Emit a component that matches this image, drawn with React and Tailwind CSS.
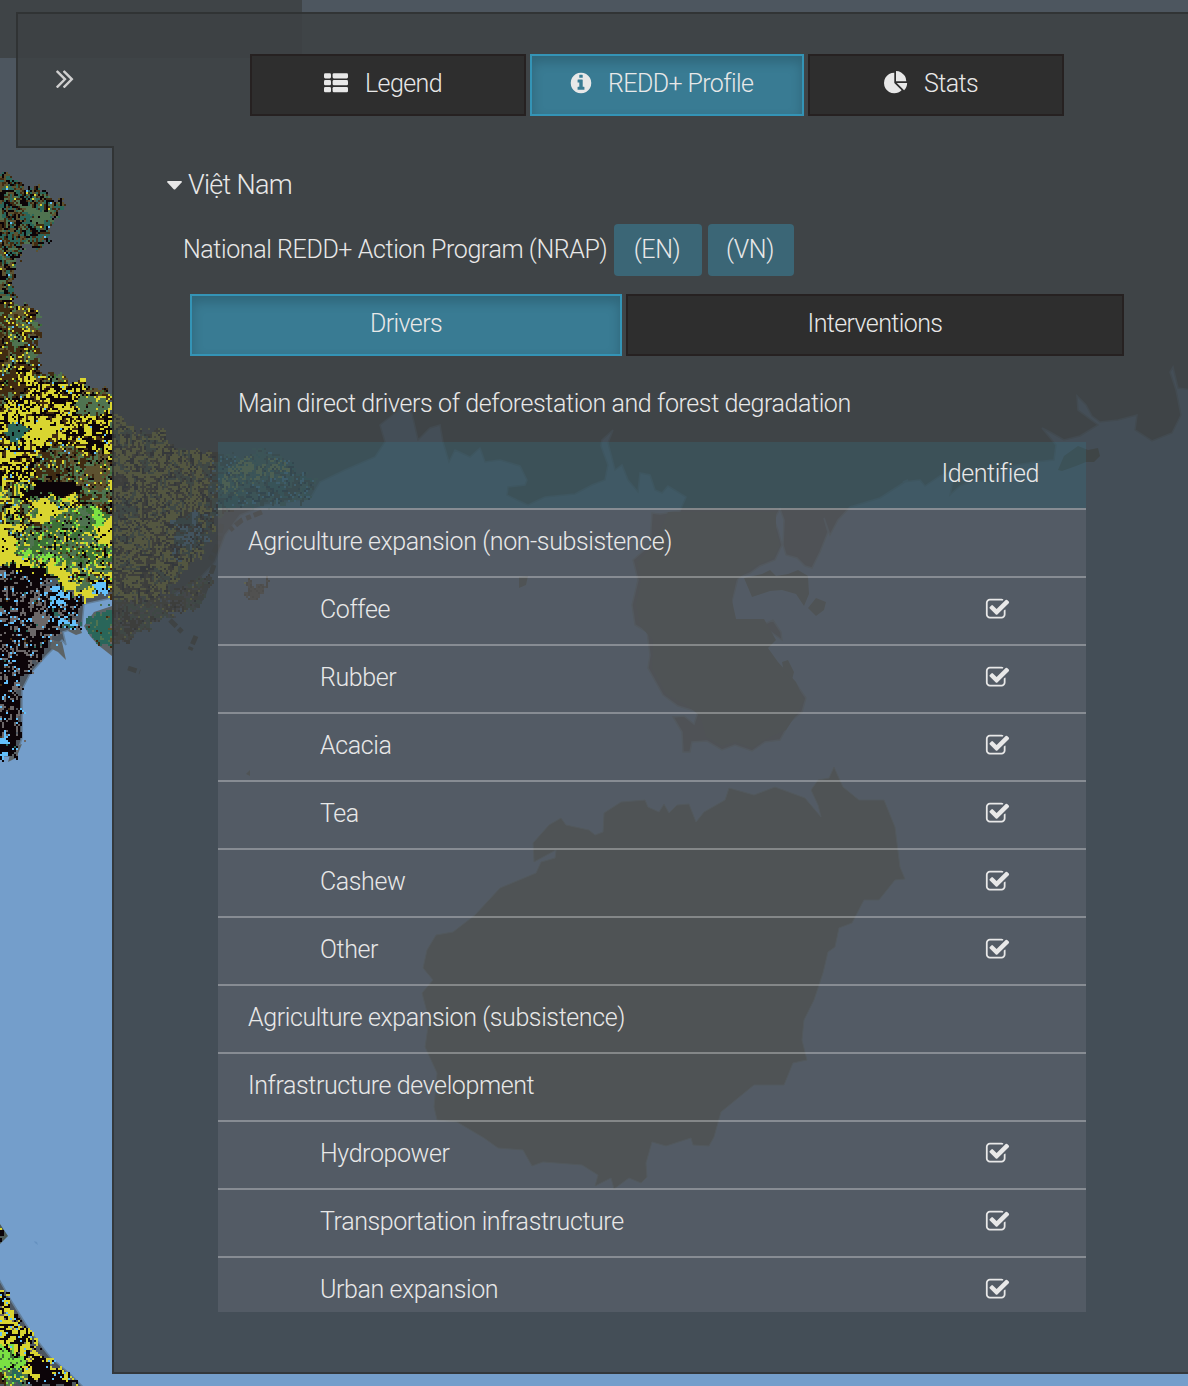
import React from 'react';

/* ---------- Map terrain ---------- */

const COLORS = {
  yellow: '#d9d530',
  black: '#0c0408',
  brown: '#402b12',
  teal: '#2a665a',
  green: '#4f7350',
  moss: '#3c7038',
  cyan: '#63c0fb',
  lime: '#7be043',
  gray: '#6b6768',
  olive: '#5d5230',
};

// Later regions are drawn over earlier ones. `main` colours follow the broad
// noise, `black` is the density of dark veins, specks are scattered per cell.
const REGIONS = [
  {
    poly: [[0, 172], [8, 172], [20, 180], [30, 189], [38, 184], [48, 197], [56, 202], [67, 200], [64, 208], [54, 218], [50, 232], [45, 245], [35, 249], [24, 243], [18, 262], [14, 285], [16, 302], [0, 305]],
    main: ['teal', 'olive', 'teal', 'green', 'olive', 'teal'],
    black: 0.3,
    specks: [['brown', 0.25], ['yellow', 0.02], ['cyan', 0.01]],
  },
  {
    poly: [[24, 212], [34, 206], [54, 212], [48, 222], [40, 230], [24, 226]],
    main: ['teal', 'green'],
    black: 0.08,
    specks: [['brown', 0.08]],
  },
  {
    poly: [[0, 295], [16, 303], [32, 303], [38, 318], [39, 340], [34, 345], [41, 358], [38, 372], [50, 377], [56, 374], [72, 382], [84, 380], [90, 389], [102, 387], [112, 391], [112, 480], [60, 490], [0, 480]],
    main: ['green', 'brown', 'brown', 'green', 'olive', 'brown'],
    black: 0.16,
    specks: [['yellow', 0.09], ['brown', 0.12], ['cyan', 0.012], ['moss', 0.04]],
  },
  {
    poly: [[8, 364], [22, 362], [34, 376], [60, 386], [86, 376], [86, 394], [112, 394], [112, 450], [96, 460], [70, 440], [46, 446], [36, 458], [34, 492], [0, 494], [0, 410], [26, 392]],
    main: ['yellow', 'yellow', 'brown', 'yellow', 'yellow', 'black', 'yellow'],
    black: 0.36,
    specks: [['brown', 0.05], ['cyan', 0.02], ['yellow', 0.1]],
  },
  { poly: [[78, 396], [108, 398], [106, 412], [84, 416], [74, 406]], main: ['green'], black: 0.06, specks: [['brown', 0.1]] },
  { poly: [[10, 426], [24, 422], [26, 434], [18, 444], [6, 438]], main: ['teal'], black: 0.1, specks: [['cyan', 0.03]] },
  { poly: [[92, 424], [102, 422], [104, 436], [94, 440]], main: ['black'], black: 0, specks: [['cyan', 0.03], ['yellow', 0.08]] },
  { poly: [[28, 422], [48, 418], [54, 430], [44, 444], [28, 440]], main: ['yellow'], black: 0.08, specks: [] },
  {
    poly: [[0, 484], [112, 484], [112, 590], [84, 600], [60, 588], [44, 572], [18, 566], [0, 562]],
    main: ['yellow', 'moss', 'green', 'yellow', 'brown', 'green'],
    black: 0.24,
    specks: [['yellow', 0.1], ['cyan', 0.02], ['lime', 0.02]],
  },
  {
    poly: [[36, 526], [60, 512], [88, 506], [112, 512], [112, 568], [70, 562], [14, 556], [16, 540]],
    main: ['green', 'moss', 'green', 'moss'],
    black: 0.15,
    specks: [['lime', 0.05], ['yellow', 0.14], ['gray', 0.02], ['brown', 0.04]],
  },
  { poly: [[34, 502], [44, 498], [60, 506], [54, 518], [40, 520]], main: ['yellow'], black: 0.1, specks: [] },
  { poly: [[0, 524], [22, 524], [22, 530], [0, 532]], main: ['yellow'], black: 0.05, specks: [] },
  { poly: [[96, 530], [108, 518], [114, 520], [114, 546], [98, 542]], main: ['yellow'], black: 0.15, specks: [] },
  { poly: [[92, 518], [98, 508], [103, 516], [103, 528], [92, 528]], main: ['lime'], black: 0, specks: [['moss', 0.15]] },
  { poly: [[16, 550], [48, 554], [66, 558], [40, 560], [16, 555]], main: ['lime'], black: 0.05, specks: [['green', 0.3]] },
  { poly: [[0, 532], [14, 536], [16, 556], [0, 562]], main: ['yellow'], black: 0.16, specks: [] },
  {
    poly: [[46, 566], [54, 560], [64, 564], [68, 580], [80, 588], [92, 584], [97, 596], [84, 600], [70, 592], [56, 578]],
    main: ['yellow'],
    black: 0.05,
    specks: [],
  },
  { poly: [[76, 580], [90, 578], [91, 588], [78, 590]], main: ['green', 'olive'], black: 0.12, specks: [['yellow', 0.1]] },
  {
    poly: [[36, 460], [112, 450], [112, 500], [96, 506], [78, 500], [64, 482], [40, 480]],
    main: ['green', 'brown', 'green', 'olive'],
    black: 0.14,
    specks: [['brown', 0.14], ['yellow', 0.04], ['moss', 0.06], ['cyan', 0.01]],
  },
  {
    poly: [[32, 486], [46, 480], [68, 479], [82, 489], [80, 493], [62, 494], [26, 499]],
    main: ['black'],
    black: 0,
    specks: [],
  },
  {
    poly: [[0, 562], [24, 566], [50, 584], [70, 594], [84, 602], [76, 614], [80, 628], [62, 630], [44, 654], [28, 672], [20, 686], [21, 738], [16, 756], [0, 760]],
    main: ['black', 'gray', 'black', 'gray', 'black'],
    black: 0.45,
    specks: [['cyan', 0.12], ['gray', 0.1], ['brown', 0.02], ['teal', 0.01]],
  },
  { poly: [[4, 562], [40, 570], [56, 580], [36, 580], [10, 572]], main: ['black'], black: 0, specks: [['yellow', 0.04]] },
  { poly: [[34, 616], [46, 614], [48, 624], [36, 628]], main: ['gray'], black: 0, specks: [] },
  { poly: [[0, 736], [14, 736], [18, 744], [10, 758], [0, 760]], main: ['cyan', 'black', 'cyan'], black: 0.2, specks: [['teal', 0.1]] },
  { poly: [[54, 586], [62, 584], [66, 600], [58, 608], [50, 602]], main: ['cyan'], black: 0.35, specks: [] },
  { poly: [[50, 612], [64, 614], [78, 620], [74, 630], [60, 628]], main: ['cyan', 'teal', 'cyan'], black: 0.25, specks: [['gray', 0.1]] },
  { poly: [[96, 584], [112, 580], [112, 592], [98, 596]], main: ['cyan', 'black'], black: 0.2, specks: [] },
  {
    poly: [[84, 624], [94, 612], [112, 606], [112, 652], [98, 640]],
    main: ['teal'],
    black: 0,
    specks: [['green', 0.08], ['brown', 0.04]],
  },
  {
    poly: [[112, 416], [125, 420], [138, 434], [165, 428], [170, 448], [190, 450], [215, 454], [215, 520], [205, 548], [176, 584], [150, 602], [130, 608], [112, 600]],
    main: ['yellow', 'brown', 'yellow', 'yellow', 'green', 'yellow'],
    black: 0.2,
    specks: [['brown', 0.08], ['olive', 0.08]],
  },
  {
    poly: [[172, 520], [196, 510], [214, 512], [206, 545], [188, 552], [174, 560]],
    main: ['teal', 'cyan', 'teal', 'yellow'],
    black: 0.3,
    specks: [['brown', 0.15]],
  },
  {
    poly: [[210, 452], [235, 458], [265, 448], [282, 458], [300, 472], [318, 480], [308, 500], [270, 504], [240, 508], [210, 520]],
    main: ['teal', 'green', 'brown', 'teal'],
    black: 0.2,
    specks: [['cyan', 0.14]],
  },
  {
    poly: [[220, 482], [240, 456], [262, 449], [290, 470], [268, 478], [245, 490], [220, 502]],
    main: ['yellow', 'green', 'yellow'],
    black: 0.05,
    specks: [['teal', 0.15], ['brown', 0.15]],
  },
  {
    poly: [[112, 600], [165, 598], [178, 590], [212, 574], [206, 600], [186, 612], [160, 618], [130, 640], [112, 648]],
    main: ['brown', 'olive', 'green', 'brown'],
    black: 0.05,
    specks: [['yellow', 0.06], ['gray', 0.2]],
  },
  { poly: [[245, 584], [256, 578], [252, 590], [272, 578], [268, 590], [250, 602]], main: ['yellow', 'olive'], black: 0, specks: [['brown', 0.3]] },
  { poly: [[0, 1228], [6, 1236], [0, 1242]], main: ['yellow', 'black'], black: 0, specks: [] },
  {
    poly: [[0, 1286], [8, 1300], [28, 1334], [48, 1358], [68, 1376], [82, 1386], [0, 1386]],
    main: ['yellow', 'black', 'yellow', 'yellow', 'yellow'],
    black: 0.36,
    specks: [['cyan', 0.07], ['gray', 0.05]],
  },
  { poly: [[30, 1356], [40, 1358], [64, 1378], [66, 1386], [40, 1386]], main: ['black'], black: 0, specks: [['cyan', 0.06]] },
  { poly: [[0, 1342], [12, 1350], [28, 1360], [26, 1368], [10, 1372], [0, 1370]], main: ['lime'], black: 0.12, specks: [['moss', 0.2]] },
  { poly: [[0, 1370], [26, 1366], [28, 1386], [0, 1386]], main: ['brown', 'green', 'teal'], black: 0.15, specks: [['lime', 0.12], ['yellow', 0.1]] },
];

function hash(x, y, s) {
  let h = Math.imul(x, 374761393) ^ Math.imul(y, 668265263) ^ Math.imul(s + 1, 1274126177);
  h = Math.imul(h ^ (h >>> 13), 1103515245);
  h = Math.imul(h ^ (h >>> 16), 2246822519);
  return ((h ^ (h >>> 15)) >>> 0) / 4294967296;
}

function smooth(x, y, s) {
  const xi = Math.floor(x);
  const yi = Math.floor(y);
  const fx = x - xi;
  const fy = y - yi;
  const a = hash(xi, yi, s) * (1 - fx) + hash(xi + 1, yi, s) * fx;
  const b = hash(xi, yi + 1, s) * (1 - fx) + hash(xi + 1, yi + 1, s) * fx;
  return a * (1 - fy) + b * fy;
}

function inside(px, py, poly) {
  let hit = false;
  for (let i = 0, j = poly.length - 1; i < poly.length; j = i++) {
    const [xi, yi] = poly[i];
    const [xj, yj] = poly[j];
    if (yi > py !== yj > py && px < ((xj - xi) * (py - yi)) / (yj - yi) + xi) hit = !hit;
  }
  return hit;
}

function cellColor(cx, cy) {
  const x = cx * 2 + 1;
  const y = cy * 2 + 1;
  const jx = Math.max(1, x + (smooth(cx / 2, cy / 2, 5) - 0.5) * 10);
  const jy = y + (smooth(cx / 2, cy / 2, 9) - 0.5) * 10;
  for (let i = REGIONS.length - 1; i >= 0; i--) {
    const region = REGIONS[i];
    if (!inside(jx, jy, region.poly)) continue;
    const vein = Math.abs(smooth(cx / 2.6, cy / 2.6, 40) - 0.5) + hash(cx, cy, 50) * 0.04;
    if (vein < region.black * 0.29) return 'black';
    let r = hash(cx, cy, 3);
    for (const [name, weight] of region.specks) {
      if (r < weight) return name;
      r -= weight;
    }
    const n = smooth(cx / 4.5, cy / 4.5, 21) * 0.75 + smooth(cx / 1.8, cy / 1.8, 33) * 0.25;
    const k = Math.min(0.999, Math.max(0, (n - 0.2) / 0.6));
    return region.main[Math.floor(k * region.main.length)];
  }
  return null;
}

function buildTerrain() {
  const paths = {};
  for (let cy = 84; cy < 693; cy++) {
    if (cy > 384 && cy < 610) continue;
    let start = 0;
    let current = null;
    for (let cx = 0; cx <= 162; cx++) {
      const c = cx === 162 ? null : cellColor(cx, cy);
      if (c !== current) {
        if (current) paths[current] = (paths[current] || '') + `M${start * 2} ${cy * 2}h${(cx - start) * 2}v2h-${(cx - start) * 2}z`;
        current = c;
        start = cx;
      }
    }
  }
  return paths;
}

const TERRAIN = buildTerrain();

const SEA =
  'M-4 755L16 757L22 738L22 690L30 674L46 656L62 640L66 645L63 632L82 626L84 604L112 598L165 600L200 578L215 562L225 535L240 515L265 505L310 499L320 482L345 470L375 457L385 442L380 425L395 413L403 405L412 414L418 440L430 428L440 425L443 442L449 462L455 450L470 457L480 448L485 462L500 460L520 466L527 480L525 485L508 487L507 495L517 500L528 505L545 497L575 494L592 485L605 480L608 465L601 446L602 440L613 430L608 443L615 470L622 465L628 480L638 492L640 473L650 475L655 490L662 493L668 486L686 497L680 511L660 514L652 513L650 545L633 560L638 580L632 605L635 625L647 632L650 655L648 668L663 695L678 706L688 709L698 712L694 724L684 716L673 717L682 732L683 752L690 752L692 742L707 741L722 750L735 745L752 751L765 742L780 740L790 722L802 712L806 698L797 685L785 677L775 665L765 655L763 645L768 630L782 640L781 632L773 620L765 624L736 621L731 605L735 590L738 578L750 573L760 566L775 560L782 545L778 530L774 520L780 509L784 520L783 545L786 555L797 558L805 566L812 568L820 552L828 532L824 518L830 535L838 520L850 507L880 498L908 480L903 482L920 480L925 486L940 476L955 470L950 495L960 486L975 480L990 482L1010 466L1035 462L1054 460L1056 445L1042 428L1050 432L1064 440L1080 436L1098 425L1078 410L1077 396L1086 405L1092 416L1100 422L1118 420L1137 415L1135 430L1152 441L1172 433L1181 415L1176 390L1170 372L1173 367L1178 388L1192 390V1390H86L70 1374L50 1357L30 1331L12 1302L-4 1274Z';

const PENINSULA =
  'M668 512L776 512L776 530L780 545L774 558L758 565L744 574L736 580L732 600L736 619L764 619L776 640L768 648L778 662L796 682L804 700L798 712L786 730L768 738L752 748L735 742L722 746L706 737L700 716L688 706L666 694L652 668L653 640L640 626L636 604L641 580L637 562L653 546Z';

const HAINAN =
  'M533 843L549 825L561 818L566 825L589 830L595 835L603 832L604 813L621 802L645 800L648 807L659 812L664 804L669 813L677 805L689 804L696 822L704 812L725 800L729 788L754 795L775 787L805 798L821 817L818 805L811 790L818 780L829 778L834 767L843 787L859 800L884 800L895 827L900 867L905 879L895 880L879 900L864 900L852 923L839 928L835 947L828 952L823 973L814 1000L804 1020L802 1040L807 1060L793 1063L784 1085L754 1085L721 1112L714 1137L709 1146L693 1145L691 1138L666 1146L652 1142L646 1163L647 1177L641 1183L629 1178L614 1189L611 1178L595 1186L598 1175L582 1165L543 1162L532 1166L523 1150L498 1148L484 1138L457 1122L437 1120L434 1107L437 1073L425 1047L429 1020L422 993L433 980L423 968L427 950L436 935L453 932L475 915L500 888L536 873L541 862L555 858L556 850L534 862Z';

const ISLANDS =
  'M744 578L762 574L770 570L776 576L788 574L798 570L808 576L809 594L804 606L796 594L782 590L770 591L752 597ZM816 598L826 602L824 610L816 616L808 608ZM519 577L528 576L526 585L519 588ZM1088 450L1098 448L1100 456L1094 462L1086 462L1076 466L1062 471L1058 470L1064 456L1078 446ZM246 774L250 770L250 776ZM782 662L788 660L794 672L792 680L784 672ZM0 1224L8 1236L0 1244Z';

function MapBackground() {
  return (
    <svg className="absolute inset-0" width="1188" height="1386" viewBox="0 0 1188 1386" aria-hidden="true">
      <rect width="1188" height="1386" fill="#4d565f" />
      <path d={SEA} fill="#749ecb" stroke="#637f9a" strokeWidth="1.500" />
      <path d={PENINSULA} fill="#4d5c58" />
      <path d={HAINAN} fill="#4d5e58" stroke="#637f91" strokeWidth="1" />
      <path d={ISLANDS} fill="#4d5a56" />
      <path d="M84 626L94 612L112 606V656L98 645L90 636ZM52 640l10 2 4 18-8-8-8-4zM70 628l10 0 2 5-6 2-8-4zM12 748l10-4-6 14-8 4z" fill="#5c6366" />
      <path d="M34 1241l3 1 1 3-3-2z" fill="#6691c0" />
      <g shapeRendering="crispEdges">
        {Object.entries(TERRAIN).map(([name, d]) => (
          <path key={name} d={d} fill={COLORS[name]} />
        ))}
      </g>
      <path d="M222 524l-5 22-8 16M262 512l-20 8-12 10M214 565l-10 28-8 14M170 620l14 14M196 636l-6 14M128 668l12 4" fill="none" stroke="#4d4f4a" strokeWidth="5" strokeDasharray="9 3 5 4" />
    </svg>
  );
}

/* ---------- Icons ---------- */

const ListIcon = () => (
  <svg width="24" height="20" viewBox="0 0 24 20" fill="currentColor">
    {[0.2, 7.1, 14].map((y) => (
      <g key={y}>
        <rect x="0" y={y} width="7" height="5.2" rx="1.3" />
        <rect x="8.6" y={y} width="15.4" height="5.2" rx="1.3" />
      </g>
    ))}
  </svg>
);

const InfoIcon = () => (
  <svg width="24" height="24" viewBox="0 0 1792 1792" fill="currentColor">
    <path d="M1152 1376v-160q0-14-9-23t-23-9h-96v-512q0-14-9-23t-23-9h-320q-14 0-23 9t-9 23v160q0 14 9 23t23 9h96v320h-96q-14 0-23 9t-9 23v160q0 14 9 23t23 9h448q14 0 23-9t9-23zm-128-896v-160q0-14-9-23t-23-9h-192q-14 0-23 9t-9 23v160q0 14 9 23t23 9h192q14 0 23-9t9-23zm640 416q0 209-103 385.500t-279.500 279.500-385.500 103-385.500-103-279.500-279.500-103-385.500 103-385.500 279.500-279.500 385.500-103 385.500 103 279.500 279.500 103 385.500z" />
  </svg>
);

const PieIcon = () => (
  <svg width="24" height="24" viewBox="0 0 1792 1792" fill="currentColor">
    <path d="M768 890l546 546q-106 108-247.500 168t-298.500 60q-209 0-385.500-103t-279.500-279.500-103-385.500 103-385.500 279.500-279.500 385.500-103v762zm187 6h773q0 157-60 298.500t-168 247.500zm709-128h-768v-768q209 0 385.500 103t279.500 279.500 103 385.500z" />
  </svg>
);

const CheckIcon = () => (
  <svg width="25" height="25" viewBox="0 0 1792 1792" fill="currentColor">
    <path d="M1472 930v318q0 119-84.500 203.500t-203.500 84.500h-832q-119 0-203.500-84.500t-84.500-203.500v-832q0-119 84.500-203.500t203.500-84.500h832q63 0 117 25 15 7 18 23 3 17-9 29l-49 49q-10 10-23 10-3 0-9-2-23-6-45-6h-832q-66 0-113 47t-47 113v832q0 66 47 113t113 47h832q66 0 113-47t47-113v-254q0-13 9-22l64-64q10-10 23-10 6 0 12 3 20 8 20 29zm231-489l-814 814q-24 24-57 24t-57-24l-430-430q-24-24-24-57t24-57l110-110q24-24 57-24t57 24l263 263 647-647q24-24 57-24t57 24l110 110q24 24 24 57t-24 57z" />
  </svg>
);

const DoubleChevron = () => (
  <svg width="32" height="32" viewBox="0 0 1792 1792" fill="currentColor">
    <path d="M979 960q0 13-10 23l-466 466q-10 10-23 10t-23-10l-50-50q-10-10-10-23t10-23l393-393-393-393q-10-10-10-23t10-23l50-50q10-10 23-10t23 10l466 466q10 10 10 23zm384 0q0 13-10 23l-466 466q-10 10-23 10t-23-10l-50-50q-10-10-10-23t10-23l393-393-393-393q-10-10-10-23t10-23l50-50q10-10 23-10t23 10l466 466q10 10 10 23z" />
  </svg>
);

/* ---------- Panel ---------- */

function TabButton({ active, className, children }) {
  return (
    <button
      className={
        (active
          ? 'border-[#3494b6] bg-[#397b93] shadow-[inset_0_6px_12px_rgba(0,0,0,0.18)] '
          : 'border-[#262121] bg-[#2e2e2e] ') +
        'flex h-[62px] shrink-0 items-center border-2 font-light tracking-[-0.6px] whitespace-nowrap ' +
        className
      }
    >
      {children}
    </button>
  );
}

const ROWS = [
  ['Agriculture expansion (non-subsistence)', false],
  ['Coffee', true],
  ['Rubber', true],
  ['Acacia', true],
  ['Tea', true],
  ['Cashew', true],
  ['Other', true],
  ['Agriculture expansion (subsistence)', false],
  ['Infrastructure development', false],
  ['Hydropower', true],
  ['Transportation infrastructure', true],
  ['Urban expansion', true],
];

function DriversTable() {
  return (
    <div className="ml-[104px] h-[870px] w-[868px] overflow-hidden">
      <div className="flex h-[66px] items-center justify-end bg-[rgba(49,133,161,0.2)] pr-[47px] pb-0.5">Identified</div>
      {ROWS.map(([label, item]) => (
        <div
          key={label}
          className={
            (item ? 'pl-[102px] ' : 'pl-[30px] ') +
            'flex h-[68px] items-center justify-between border-t-2 border-white/30 bg-[rgba(248,236,246,0.09)] pr-[76px] pb-1'
          }
        >
          <span className="pt-0.5">{label}</span>
          {item && <CheckIcon />}
        </div>
      ))}
    </div>
  );
}

export default function App() {
  return (
    <div className="relative h-[1386px] w-[1188px] overflow-hidden bg-[#4d565f] font-['Roboto',sans-serif] text-[25px] leading-[30px] font-light tracking-[-0.4px] text-[#e8e8e8]">
      <MapBackground />
      <div className="absolute top-0 left-0 h-[58px] w-[302px] bg-[rgba(61,65,67,0.86)]" />
      <div className="relative pt-3 pl-4">
        <div className="flex h-[136px]">
          <div className="flex w-[98px] shrink-0 border-t-2 border-b-2 border-l-2 border-[rgba(40,42,42,0.6)] bg-[rgba(61,65,67,0.86)] pt-12 pl-[31px] text-[#cfcfcf]">
            <DoubleChevron />
          </div>
          <div className="flex flex-1 gap-1 border-t-2 border-[rgba(40,42,42,0.6)] bg-[rgba(61,65,67,0.86)] pt-10 pl-[136px]">
            <TabButton className="w-[276px] gap-[17px] pb-1 pl-[72px]">
              <ListIcon />
              <span className="pt-0.5">Legend</span>
            </TabButton>
            <TabButton active className="w-[274px] gap-[15px] pb-1 pl-[37px]">
              <InfoIcon />
              <span className="pt-0.5">REDD+ Profile</span>
            </TabButton>
            <TabButton className="w-[256px] gap-4 pb-1 pl-[74px]">
              <PieIcon />
              <span className="pt-0.5">Stats</span>
            </TabButton>
          </div>
        </div>
        <div className="ml-24 h-[1226px] border-b-2 border-l-2 border-[rgba(40,42,42,0.6)] bg-[rgba(61,65,67,0.86)]">
          <div className="flex h-[76px] items-center gap-[6px] pl-[53px] pb-[2px] text-[27px] tracking-[-0.7px]">
            <svg width="15" height="9" viewBox="0 0 15 9" fill="currentColor">
              <path d="M1 0h13q1.500.3.600 1.500L8.300 8.200q-.8.700-1.600 0L.4 1.500Q-.4.300 1 0z" />
            </svg>
            <span>Việt Nam</span>
          </div>
          <div className="flex h-[52px] items-center pl-[69px]">
            <span className="w-[431px] shrink-0 whitespace-nowrap">National REDD+ Action Program (NRAP)</span>
            <span className="flex h-[52px] w-[88px] items-center justify-center rounded bg-[#3b6676] pr-[2px]">(EN)</span>
            <span className="ml-[6px] flex h-[52px] w-[86px] items-center justify-center rounded bg-[#3b6676] pr-[2px]">(VN)</span>
          </div>
          <div className="mt-[18px] ml-[76px] flex gap-1">
            <TabButton active className="w-[432px] justify-center pb-0.5">Drivers</TabButton>
            <TabButton className="w-[498px] justify-center pb-0.5">Interventions</TabButton>
          </div>
          <p className="h-[86px] pt-[33px] pl-[124px]">Main direct drivers of deforestation and forest degradation</p>
          <DriversTable />
        </div>
      </div>
    </div>
  );
}
